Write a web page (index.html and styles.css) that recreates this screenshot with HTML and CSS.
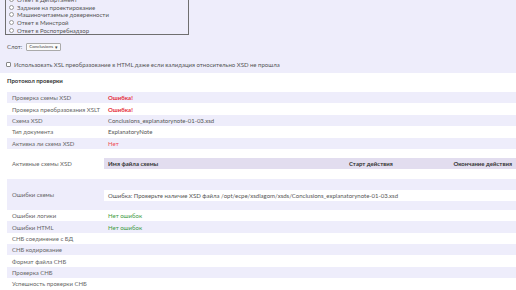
FILE: index.html
```html
<!DOCTYPE html>
<html>
<head>
<meta charset="utf-8">
<title>Протокол проверки</title>
<link rel="stylesheet" href="styles.css">
</head>
<body>
<div class="top-panel">
    <div class="doc-list">
        <label class="doc-item"><span class="radio"></span>Ответ в Департамент</label>
        <label class="doc-item"><span class="radio"></span>Задание на проектирование</label>
        <label class="doc-item"><span class="radio"></span>Машиночитаемые доверенности</label>
        <label class="doc-item"><span class="radio"></span>Ответ в Минстрой</label>
        <label class="doc-item"><span class="radio"></span>Ответ в Роспотребнадзор</label>
    </div>
    <div class="slot-row">
        <span>Слот:</span>
        <span class="slot-select">Conclusions <span class="caret">&#9662;</span></span>
    </div>
    <label class="xsl-row"><span class="checkbox"></span>Использовать XSL преобразование в HTML даже если валидация относительно XSD не прошла</label>
</div>

<div class="report">
    <h3 class="report-title">Протокол проверки</h3>
    <table class="report-table">
        <tr><td class="label">Проверка схемы XSD</td><td class="error">Ошибка!</td></tr>
        <tr><td class="label">Проверка преобразования XSLT</td><td class="error">Ошибка!</td></tr>
        <tr><td class="label">Схема XSD</td><td>Conclusions_explanatorynote-01-03.xsd</td></tr>
        <tr><td class="label">Тип документа</td><td>ExplanatoryNote</td></tr>
        <tr><td class="label">Активна ли схема XSD</td><td class="no">Нет</td></tr>
        <tr class="nested-row">
            <td class="label">Активные схемы XSD</td>
            <td class="nested-cell">
                <table class="inner-table schemas">
                    <tr class="inner-head"><th class="col-name">Имя файла схемы</th><th class="col-start">Старт действия</th><th class="col-end">Окончание действия</th></tr>
                </table>
            </td>
        </tr>
        <tr class="nested-row">
            <td class="label">Ошибки схемы</td>
            <td class="nested-cell">
                <table class="inner-table errors">
                    <tr><td>Ошибка: Проверьте наличие XSD файла /opt/ecpe/xsdlagom/xsds/Conclusions_explanatorynote-01-03.xsd</td></tr>
                </table>
            </td>
        </tr>
        <tr><td class="label">Ошибки логики</td><td class="ok">Нет ошибок</td></tr>
        <tr><td class="label">Ошибки HTML</td><td class="ok">Нет ошибок</td></tr>
        <tr><td class="label">СНБ соединение с БД</td><td></td></tr>
        <tr><td class="label">СНБ кодирование</td><td></td></tr>
        <tr><td class="label">Формат файла СНБ</td><td></td></tr>
        <tr><td class="label">Проверка СНБ</td><td></td></tr>
        <tr><td class="label">Успешность проверки СНБ</td><td></td></tr>
    </table>
</div>
</body>
</html>
```
FILE: styles.css
```css
/* Reset */
* { margin: 0; padding: 0; box-sizing: border-box; }

html, body {
    overflow: hidden;
}

body {
    font-family: Lato, "Open Sans", sans-serif;
    font-size: 6px;
    color: #555;
    background: #fff;
    white-space: nowrap;
}

/* Top panel */
.top-panel {
    background: #eeedfb;
    padding: 0 5px 5px;
}

.doc-list {
    width: 184px;
    margin-top: -5px;
    border: 1px solid #6f6f6f;
    border-top: 0;
    padding: 1px 3px 0;
}

.doc-item {
    display: flex;
    align-items: center;
    gap: 3px;
    height: 7.6px;
    color: #555;
}

.radio {
    width: 5px;
    height: 5px;
    border: 0.6px solid #999;
    border-radius: 50%;
    background: #fff;
}

.slot-row {
    display: flex;
    align-items: center;
    gap: 4px;
    margin-top: 8px;
    padding-left: 2px;
}

.slot-select {
    display: flex;
    align-items: center;
    gap: 2px;
    height: 8px;
    padding: 0 2px;
    border: 1px solid #aaa;
    border-radius: 1px;
    background: #fafafa;
    font-size: 4.5px;
    color: #444;
}

.caret {
    font-size: 5px;
}

.xsl-row {
    display: flex;
    align-items: center;
    gap: 3px;
    margin-top: 10px;
    padding-left: 1px;
    color: #555;
}

.checkbox {
    width: 5px;
    height: 5px;
    border: 0.6px solid #888;
    border-radius: 1px;
    background: #fff;
}

/* Report */
.report {
    padding: 3px 7px 0;
}

.report-title {
    font-size: 6px;
    font-weight: bold;
    color: #333;
    line-height: 10px;
    margin-bottom: 6px;
}

.report-table {
    width: 509px;
    border-collapse: collapse;
}

.report-table > tbody > tr:nth-child(odd) {
    background: #eeedfb;
}

.report-table > tbody > tr > td {
    height: 11.4px;
    padding: 0 4px;
    vertical-align: middle;
    color: #555;
}

.report-table td.label {
    width: 96px;
    padding-left: 5px;
    color: #666;
}

.report-table td.error {
    color: #e52e3b;
    font-weight: bold;
}

.report-table td.no {
    color: #ee4b55;
}

.report-table td.ok {
    color: #3f9a45;
}

.report-table td.nested-cell {
    padding: 0;
}

.inner-table {
    width: 100%;
    border-collapse: collapse;
}

.schemas {
    margin: 9px 0 10px;
}

.inner-head {
    background: #e2ddef;
}

.inner-head th {
    height: 11px;
    padding: 0 4px;
    text-align: left;
    font-weight: bold;
    color: #333;
}

.col-name { width: 243px; }
.col-start { width: 105px; }

.errors {
    margin: 11px 0 9px;
    background: #fff;
}

.errors td {
    height: 11px;
    padding: 0 4px;
    color: #555;
}
```
